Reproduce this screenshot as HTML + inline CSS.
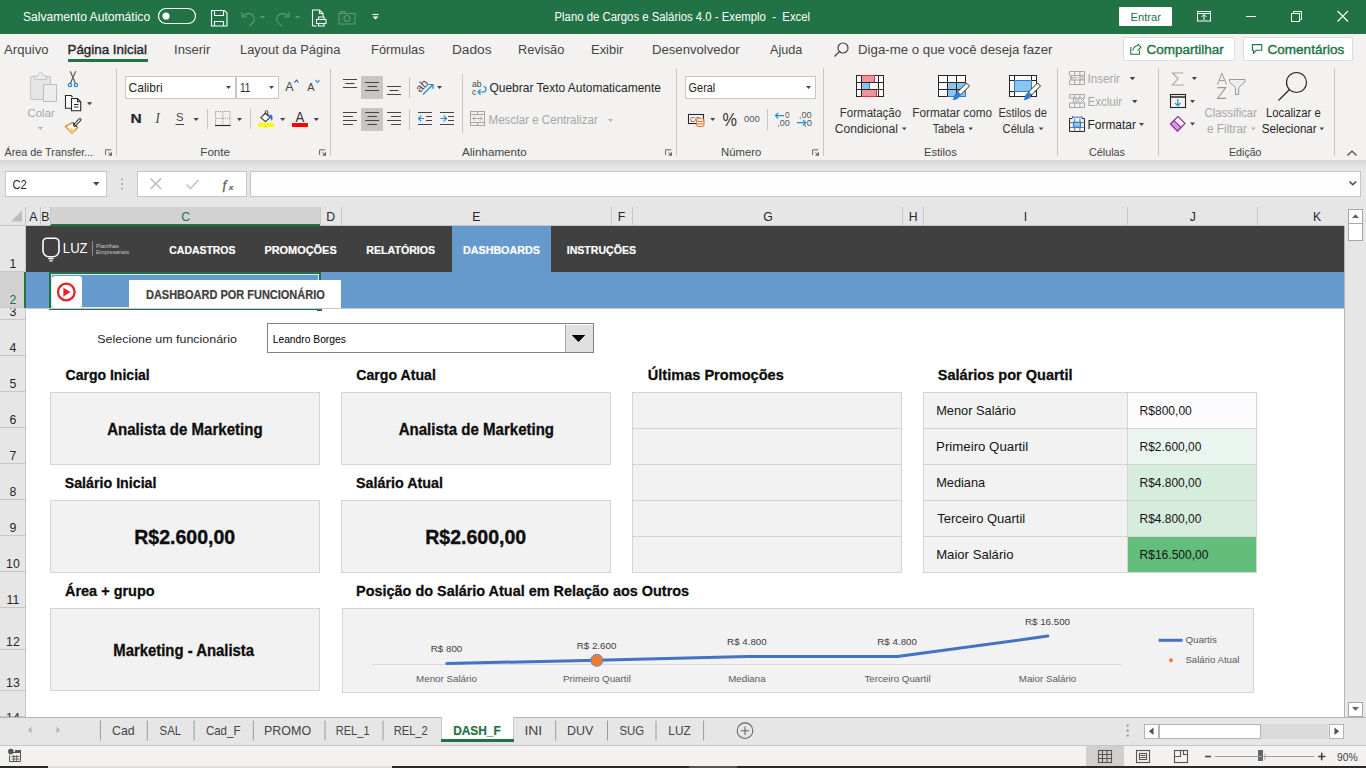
<!DOCTYPE html>
<html><head><meta charset="utf-8"><title>Plano de Cargos e Salários 4.0 - Exemplo - Excel</title>
<style>
html,body{margin:0;padding:0;width:1366px;height:768px;overflow:hidden;background:#fff;}
#app{position:relative;width:1366px;height:768px;overflow:hidden;font-family:"Liberation Sans",sans-serif;}
#app>div{position:absolute;box-sizing:border-box;}
svg{position:absolute;left:0;top:0;}
svg{font-family:"Liberation Sans",sans-serif;}
</style></head><body><div id="app">
<div style="left:0px;top:0px;width:1366px;height:34px;background:#217346"></div>
<div style="left:1119px;top:7px;width:53px;height:19px;background:#fff;border-radius:1px"></div>
<div style="left:0px;top:34px;width:1366px;height:126px;background:#f3f2f1"></div>
<div style="left:68px;top:59px;width:80px;height:3px;background:#217346"></div>
<div style="left:1123px;top:37px;width:112px;height:24px;background:#fff;border:1px solid #dcdcdc;border-radius:2px"></div>
<div style="left:1243px;top:37px;width:110px;height:24px;background:#fff;border:1px solid #dcdcdc;border-radius:2px"></div>
<div style="left:125px;top:76px;width:111px;height:23px;background:#fff;border:1px solid #c6c6c6"></div>
<div style="left:236px;top:76px;width:43px;height:23px;background:#fff;border:1px solid #c6c6c6"></div>
<div style="left:258px;top:123px;width:16px;height:4px;background:#ffff00"></div>
<div style="left:292px;top:123px;width:16px;height:4px;background:#ff0000"></div>
<div style="left:361px;top:76px;width:22px;height:23px;background:#c8c6c4"></div>
<div style="left:361px;top:108px;width:22px;height:23px;background:#c8c6c4"></div>
<div style="left:685px;top:76px;width:131px;height:23px;background:#fff;border:1px solid #c6c6c6"></div>
<div style="left:0px;top:160px;width:1366px;height:66px;background:#e6e6e6"></div>
<div style="left:0px;top:160px;width:1366px;height:8px;background:linear-gradient(#d5d5d5,#e6e6e6)"></div>
<div style="left:5px;top:171px;width:102px;height:26px;background:#fff;border:1px solid #c6c6c6"></div>
<div style="left:137px;top:171px;width:110px;height:26px;background:#fff;border:1px solid #c6c6c6"></div>
<div style="left:250px;top:171px;width:1111px;height:26px;background:#fdfdfd;border:1px solid #c6c6c6"></div>
<div style="left:0px;top:207px;width:1344px;height:19px;background:#e6e6e6;border-bottom:1px solid #c6c6c6"></div>
<div style="left:50px;top:207px;width:270px;height:19px;background:#d2d2d2;border-bottom:2px solid #217346"></div>
<div style="left:0px;top:226px;width:26px;height:491px;background:#e6e6e6"></div>
<div style="left:0px;top:272px;width:26px;height:36px;background:#d2d2d2;border-right:2px solid #217346"></div>
<div style="left:26px;top:226px;width:1318px;height:491px;background:#fff"></div>
<div style="left:26px;top:226px;width:1318px;height:46px;background:#404040"></div>
<div style="left:26px;top:272px;width:1318px;height:37px;background:#6699cc"></div>
<div style="left:452px;top:226px;width:99px;height:46px;background:#6699cc"></div>
<div style="left:49px;top:272px;width:272px;height:38px;border:2px solid #217346"></div>
<div style="left:51px;top:274px;width:268px;height:34px;border:1px solid #dfe8f2"></div>
<div style="left:52px;top:276px;width:30px;height:32px;background:#fff;border-radius:3px"></div>
<div style="left:129px;top:280px;width:212px;height:28px;background:#fff"></div>
<div style="left:317px;top:307.5px;width:5px;height:3.5px;background:#217346"></div>
<div style="left:267px;top:323px;width:327px;height:30px;background:#fff;border:1px solid #7d828a"></div>
<div style="left:565px;top:324px;width:28px;height:28px;background:#e0e0e0;border-left:1px solid #a6a6a6;border-top:1px solid #fff"></div>
<div style="left:50px;top:392px;width:270px;height:73px;background:#f2f2f2;border:1px solid #d4d4d4"></div>
<div style="left:341px;top:392px;width:270px;height:73px;background:#f2f2f2;border:1px solid #d4d4d4"></div>
<div style="left:50px;top:500px;width:270px;height:73px;background:#f2f2f2;border:1px solid #d4d4d4"></div>
<div style="left:341px;top:500px;width:270px;height:73px;background:#f2f2f2;border:1px solid #d4d4d4"></div>
<div style="left:50px;top:608px;width:270px;height:83px;background:#f2f2f2;border:1px solid #d4d4d4"></div>
<div style="left:632px;top:392px;width:270px;height:37px;background:#f2f2f2;border:1px solid #d4d4d4"></div>
<div style="left:632px;top:428px;width:270px;height:37px;background:#f2f2f2;border:1px solid #d4d4d4"></div>
<div style="left:632px;top:464px;width:270px;height:37px;background:#f2f2f2;border:1px solid #d4d4d4"></div>
<div style="left:632px;top:500px;width:270px;height:37px;background:#f2f2f2;border:1px solid #d4d4d4"></div>
<div style="left:632px;top:536px;width:270px;height:37px;background:#f2f2f2;border:1px solid #d4d4d4"></div>
<div style="left:923px;top:392px;width:205px;height:37px;background:#f2f2f2;border:1px solid #d4d4d4"></div>
<div style="left:1127px;top:392px;width:130px;height:37px;background:#fcfcff;border:1px solid #d4d4d4"></div>
<div style="left:923px;top:428px;width:205px;height:37px;background:#f2f2f2;border:1px solid #d4d4d4"></div>
<div style="left:1127px;top:428px;width:130px;height:37px;background:#ebf5f0;border:1px solid #d4d4d4"></div>
<div style="left:923px;top:464px;width:205px;height:37px;background:#f2f2f2;border:1px solid #d4d4d4"></div>
<div style="left:1127px;top:464px;width:130px;height:37px;background:#d6ecdd;border:1px solid #d4d4d4"></div>
<div style="left:923px;top:500px;width:205px;height:37px;background:#f2f2f2;border:1px solid #d4d4d4"></div>
<div style="left:1127px;top:500px;width:130px;height:37px;background:#d6ecdd;border:1px solid #d4d4d4"></div>
<div style="left:923px;top:536px;width:205px;height:37px;background:#f2f2f2;border:1px solid #d4d4d4"></div>
<div style="left:1127px;top:536px;width:130px;height:37px;background:#63be7b;border:1px solid #d4d4d4"></div>
<div style="left:342px;top:608px;width:912px;height:85px;background:#f2f2f2;border:1px solid #d4d4d4"></div>
<div style="left:1344px;top:207px;width:22px;height:510px;background:#e6e6e6"></div>
<div style="left:1344px;top:226px;width:1px;height:491px;background:#b4b4b4"></div>
<div style="left:1348px;top:209px;width:15px;height:15px;background:#fff;border:1px solid #a6a6a6"></div>
<div style="left:1348px;top:223px;width:15px;height:18px;background:#fff;border:1px solid #a6a6a6"></div>
<div style="left:1348px;top:702px;width:15px;height:15px;background:#fff;border:1px solid #a6a6a6"></div>
<div style="left:0px;top:717px;width:1366px;height:29px;background:#e6e6e6;border-top:1px solid #b4b4b4;border-bottom:1px solid #c6c6c6"></div>
<div style="left:441px;top:717px;width:73px;height:25px;background:#fff;border-left:1px solid #c6c6c6;border-right:1px solid #c6c6c6"></div>
<div style="left:441px;top:739px;width:73px;height:3px;background:#217346"></div>
<div style="left:1159px;top:724px;width:169px;height:15px;background:#dadada"></div>
<div style="left:1144px;top:724px;width:15px;height:15px;background:#fff;border:1px solid #b4b4b4"></div>
<div style="left:1159px;top:724px;width:102px;height:15px;background:#fff;border:1px solid #b4b4b4"></div>
<div style="left:1329px;top:724px;width:15px;height:15px;background:#fff;border:1px solid #b4b4b4"></div>
<div style="left:0px;top:746px;width:1366px;height:20px;background:#f3f2f1"></div>
<div style="left:1086px;top:746px;width:38px;height:20px;background:#d2d0ce"></div>
<div style="left:1258px;top:750px;width:5px;height:11px;background:#666"></div>
<div style="left:0px;top:766px;width:1366px;height:2px;background:#2a2a2a"></div>
<div style="left:48px;top:766px;width:344px;height:2px;background:#dedede"></div>
<div style="left:689px;top:766px;width:48px;height:2px;background:#555"></div>
<svg width="1366" height="768" viewBox="0 0 1366 768">
<defs><clipPath id="rowclip" clipPathUnits="userSpaceOnUse"><rect x="0" y="226" width="26" height="491"/></clipPath><clipPath id="row3clip" clipPathUnits="userSpaceOnUse"><rect x="0" y="308.6" width="26" height="12"/></clipPath></defs>
<rect x="158.5" y="8.5" width="37" height="15" rx="7.5" fill="none" stroke="#fff" stroke-width="1.2"/>
<circle cx="166" cy="16" r="3.6" fill="#fff"/>
<g fill="none" stroke="#fff" stroke-width="1.1"><path d="M211.5 10.5h13l2.5 2.5v13h-15.5z"/><path d="M214.5 10.5v5h9v-5"/><path d="M214.5 26v-4.5h9V26"/></g>
<g fill="none" stroke="#5c9a76" stroke-width="1.1"><path d="M242 12v5h5"/><path d="M242.5 16.5c3-4 10-4 11.5 1 1 3-1 6-5 8.5"/><path d="M260 16l2.5 2.5 2.5-2.5z" fill="#5c9a76" stroke="none"/><path d="M289 12v5h-5"/><path d="M288.5 16.5c-3-4-10-4-11.5 1-1 3 1 6 5 8.5"/><path d="M295 16l2.5 2.5 2.5-2.5z" fill="#5c9a76" stroke="none"/></g>
<g fill="none" stroke="#fff" stroke-width="1.1"><path d="M312.5 26v-16h7l3.5 3.5v3"/><path d="M319.5 10v3.5h3.5"/><rect x="316.5" y="19.5" width="9.5" height="4"/><path d="M318.5 19.5v-2.5h5.5v2.5M318.5 23.5v2.5h5.5v-2.5"/><path d="M312.5 26h4"/></g>
<g fill="none" stroke="#5c9a76" stroke-width="1.1"><rect x="339" y="13.5" width="16" height="10.5"/><path d="M341 13.5v-2h3.5v2"/><circle cx="347" cy="18.5" r="3"/></g>
<path d="M372.5 14.5h6" stroke="#fff" stroke-width="1.1"/><path d="M372.5 16.5h6l-3 3z" fill="#fff"/>
<g fill="none" stroke="#fff" stroke-width="1"><rect x="1197.5" y="11.5" width="13" height="9.5"/><path d="M1197.5 13.5h13"/><path d="M1204 20v-5.5M1201.5 17l2.5-2.5 2.5 2.5"/></g>
<path d="M1246 16.5h10" stroke="#fff" stroke-width="1"/>
<g fill="none" stroke="#fff" stroke-width="1"><rect x="1291.5" y="13.5" width="8" height="8"/><path d="M1293.5 13.5v-2h8v8h-2"/></g>
<path d="M1337.5 11l10.5 10.5M1348 11l-10.5 10.5" stroke="#fff" stroke-width="1.1"/>
<g fill="none" stroke="#444" stroke-width="1.2"><circle cx="843" cy="48" r="5"/><path d="M839.5 51.5l-5 5"/></g>
<g fill="none" stroke="#217346" stroke-width="1.1"><path d="M1130.8 47v7.3h8.7v-3.8"/><path d="M1132.8 50.8c.3-3 2.2-5 5.5-5.3"/><path d="M1137.6 43.6l3.3 3.6-3.3 3.4"/></g>
<g fill="none" stroke="#217346" stroke-width="1.1" stroke-linejoin="round"><path d="M1252.4 44.6h9.4v5.7h-5.5l-2.8 3v-3h-1.1z"/></g>
<path d="M116.5 68.5V156" stroke="#c8c6c4" stroke-width="1"/>
<path d="M330.5 68.5V156" stroke="#c8c6c4" stroke-width="1"/>
<path d="M676.5 68.5V156" stroke="#c8c6c4" stroke-width="1"/>
<path d="M823.5 68.5V156" stroke="#c8c6c4" stroke-width="1"/>
<path d="M1057.5 68.5V156" stroke="#c8c6c4" stroke-width="1"/>
<path d="M1158.5 68.5V156" stroke="#c8c6c4" stroke-width="1"/>
<path d="M1334.5 68.5V156" stroke="#c8c6c4" stroke-width="1"/>
<g><path d="M105.6 155v-5.2h5.6" fill="none" stroke="#666" stroke-width="1"/><path d="M108 155.8h4v-4z" fill="#666"/><path d="M108.2 152l2.2 2.2" stroke="#666" stroke-width="0.9"/></g>
<g><path d="M319.6 155v-5.2h5.6" fill="none" stroke="#666" stroke-width="1"/><path d="M322 155.8h4v-4z" fill="#666"/><path d="M322.2 152l2.2 2.2" stroke="#666" stroke-width="0.9"/></g>
<g><path d="M665.6 155v-5.2h5.6" fill="none" stroke="#666" stroke-width="1"/><path d="M668 155.8h4v-4z" fill="#666"/><path d="M668.2 152l2.2 2.2" stroke="#666" stroke-width="0.9"/></g>
<g><path d="M812.6 155v-5.2h5.6" fill="none" stroke="#666" stroke-width="1"/><path d="M815 155.8h4v-4z" fill="#666"/><path d="M815.2 152l2.2 2.2" stroke="#666" stroke-width="0.9"/></g>
<path d="M1347.5 155.5l4.5-4.5 4.5 4.5" fill="none" stroke="#444" stroke-width="1.2"/>
<g><path d="M30.5 76.5h4v3h12v-3h4v23h-20z" fill="#e6e6e6" stroke="#c4c4c4" stroke-width="1"/><path d="M34.5 79.5v-3.5h3.5c0-2.5 1.2-3.5 2.5-3.5s2.5 1 2.5 3.5h3.5v3.5z" fill="#ececec" stroke="#c4c4c4"/><rect x="43.5" y="84.5" width="13" height="17" fill="#ececec" stroke="#bdbdbd"/></g>
<path d="M37.8 127h5.3l-2.65 3.07z" fill="#b4b4b4"/>
<g fill="none" stroke-width="1.1"><path d="M70.2 71.3l5.2 12M75.7 71.3l-5.3 12" stroke="#555"/><circle cx="70" cy="85" r="1.7" stroke="#1e8bcd" stroke-width="1.2"/><circle cx="75.9" cy="85" r="1.7" stroke="#1e8bcd" stroke-width="1.2"/></g>
<g fill="#fff" stroke="#262626" stroke-width="1.1"><path d="M71.5 108.2h-6V95.5h5.5l1.5 1.5"/><path d="M71.5 98.5h6l3.2 3.2v9h-9.2z"/><path d="M77.5 98.5v3.3h3.2" fill="none"/><path d="M74 104.5h4.5M74 107h4.5" fill="none"/></g>
<path d="M87 102.3h5.2l-2.6 3.02z" fill="#444"/>
<g><path d="M65.3 126.3l7.6-3.9 4.7 5.1-5.6 5.8z" fill="#fff" stroke="#e8852b" stroke-width="1.3" stroke-linejoin="round"/><path d="M68.3 129.6l4 3.6 2.5-2.7-3.2-2.6z" fill="#f6d27a"/><path d="M74.6 125.2l5.4-5.6" stroke="#333" stroke-width="3.2" stroke-linecap="round"/><path d="M74.6 125.2l5.4-5.6" stroke="#fff" stroke-width="1.2" stroke-linecap="round"/><path d="M73 123.2l3.7 3.7" stroke="#333" stroke-width="1.2"/></g>
<path d="M226 86h5l-2.5 2.90z" fill="#444"/>
<path d="M269 86h5l-2.5 2.90z" fill="#444"/>
<path d="M294.5 82.5l2-2.3 2 2.3" fill="none" stroke="#2b579a" stroke-width="1.1"/>
<path d="M315.5 80.2l2 2.3 2-2.3" fill="none" stroke="#2b7cd3" stroke-width="1.1"/>
<path d="M175.5 124.5h8.5" stroke="#444" stroke-width="1"/>
<path d="M193.5 118h5.3l-2.65 3.07z" fill="#444"/>
<path d="M207.5 109V129" stroke="#c8c6c4" stroke-width="1"/>
<g fill="none" stroke="#9a9a9a" stroke-width="1" stroke-dasharray="1.2 1"><path d="M215.5 111.5h14.5v13.5M215.5 111.5v13.5M222.8 112v12.5M216 118.3h14"/></g><path d="M215 125.5h15.5" stroke="#262626" stroke-width="1.1"/>
<path d="M236.8 118h5.3l-2.65 3.07z" fill="#444"/>
<path d="M250.5 109V129" stroke="#c8c6c4" stroke-width="1"/>
<g><path d="M260.8 117.7l4.6-4.5 4.9 3.9-4.8 4.6z" fill="#fff" stroke="#333" stroke-width="1.1" stroke-linejoin="round"/><path d="M265.3 114.6v-2.8a1.25 1.25 0 0 1 2.5 0v4.6" fill="none" stroke="#333" stroke-width="1"/><path d="M269.6 114.5c1.7-.3 3 1 3 3 0 1.4-.5 2.7-.9 3.4-.4-.9-1-2.4-2-3.6z" fill="#1e7bcd"/></g>
<path d="M280 118h5.3l-2.65 3.07z" fill="#444"/>
<path d="M313.7 118h5.3l-2.65 3.07z" fill="#444"/>
<path d="M343 79.5H357M343 87.5H357" stroke="#444" stroke-width="1.1"/>
<path d="M345.5 83.5H354.5" stroke="#444" stroke-width="1.1"/>
<path d="M365 82.5H379M365 90.5H379" stroke="#444" stroke-width="1.1"/>
<path d="M367.5 86.5H377" stroke="#444" stroke-width="1.1"/>
<path d="M387 86.5H401M387 94.5H401" stroke="#444" stroke-width="1.1"/>
<path d="M389.5 90.5H398.5" stroke="#444" stroke-width="1.1"/>
<path d="M409.5 77V98" stroke="#c8c6c4" stroke-width="1"/>
<g><text transform="translate(420 93) rotate(-45)" font-size="11.5" fill="#444">ab</text><path d="M423 94.5l10-10M428.5 84.5h4.5v4.5" fill="none" stroke="#1e8bcd" stroke-width="1.2"/></g>
<path d="M437 86h5l-2.5 2.90z" fill="#444"/>
<path d="M462.5 74V133" stroke="#c8c6c4" stroke-width="1"/>
<g><text x="472" y="87" font-size="8.6" fill="#444">ab</text><text x="472" y="94.5" font-size="8.6" fill="#444">c</text><path d="M478.5 92h4.5c2.3 0 3-1.3 3-2.8s-.7-2.7-2.5-2.7" fill="none" stroke="#1e8bcd" stroke-width="1.2"/><path d="M480.5 89.5l-2.5 2.5 2.5 2.5" fill="none" stroke="#1e8bcd" stroke-width="1.2"/></g>
<path d="M343 112.5H357M343 120.5H357" stroke="#444" stroke-width="1.1"/>
<path d="M343 116.5H353M343 124.5H353" stroke="#444" stroke-width="1.1"/>
<path d="M365.3 112.5H379M365.3 120.5H379" stroke="#444" stroke-width="1.1"/>
<path d="M367.5 116.5H377M367.5 124.5H377" stroke="#444" stroke-width="1.1"/>
<path d="M387 112.5H401M387 120.5H401" stroke="#444" stroke-width="1.1"/>
<path d="M391 116.5H401M391 124.5H401" stroke="#444" stroke-width="1.1"/>
<path d="M409.5 109V130" stroke="#c8c6c4" stroke-width="1"/>
<path d="M418 112.5H432M418 124.5H432" stroke="#444" stroke-width="1.1"/>
<path d="M426 116.5H432M426 120.5H432" stroke="#444" stroke-width="1.1"/>
<path d="M424 118.5h-5.5M421.3 115.7l-2.8 2.8 2.8 2.8" fill="none" stroke="#1e8bcd" stroke-width="1.2"/>
<path d="M440 112.5H454M440 124.5H454" stroke="#444" stroke-width="1.1"/>
<path d="M448 116.5H454M448 120.5H454" stroke="#444" stroke-width="1.1"/>
<path d="M440.5 118.5h5.5M443.7 115.7l2.8 2.8-2.8 2.8" fill="none" stroke="#1e8bcd" stroke-width="1.2"/>
<g fill="none" stroke="#a6a6a6" stroke-width="1"><rect x="470.5" y="111.5" width="14" height="14"/><path d="M470.5 114.5h14M470.5 122.5h14M477.5 111.5v3M477.5 122.5v3"/><path d="M473 118.5h9M474.8 116.5l-2 2 2 2M480.2 116.5l2 2-2 2"/></g>
<path d="M608 119h5l-2.5 2.90z" fill="#b4b4b4"/>
<path d="M806 86h5l-2.5 2.90z" fill="#444"/>
<g><rect x="688.5" y="114.5" width="15" height="9" fill="#fff" stroke="#262626" stroke-width="1.1"/><text x="690" y="122" font-size="7" fill="#262626">CC</text><g fill="#fff" stroke="#ed7d31" stroke-width="1.1"><path d="M696.5 120v5c0 1 1.5 1.6 3.7 1.6s3.7-.6 3.7-1.6v-5"/><ellipse cx="700.2" cy="120" rx="3.7" ry="1.5"/><path d="M696.5 122.5c0 1 1.5 1.6 3.7 1.6s3.7-.6 3.7-1.6"/></g></g>
<path d="M710.2 118h5l-2.5 2.90z" fill="#444"/>
<path d="M767.5 109V130" stroke="#c8c6c4" stroke-width="1"/>
<path d="M784 115.6h-8.5M778.3 112.8l-2.8 2.8 2.8 2.8" fill="none" stroke="#1e8bcd" stroke-width="1.2"/>
<path d="M797 122.7h8.5M803 119.9l2.8 2.8-2.8 2.8" fill="none" stroke="#1e8bcd" stroke-width="1.2"/>
<g stroke="#262626" stroke-width="1"><rect x="856.5" y="75.5" width="27" height="21" fill="#fff"/><rect x="861.5" y="75.5" width="13" height="7" fill="#f4919a" stroke="#d9363e"/><rect x="861.5" y="89.5" width="15" height="7" fill="#f4919a" stroke="#d9363e"/><rect x="861.5" y="82.5" width="8" height="7" fill="#8cc4ec" stroke="#2b7cd3"/><path d="M856.5 82.5h27M856.5 89.5h27M861.5 75.5v21M878.5 75.5v21" fill="none"/></g>
<path d="M902 127.5h4.6l-2.3 2.67z" fill="#444"/>
<path d="M968.4 127.5h4.6l-2.3 2.67z" fill="#444"/>
<path d="M1038.8 127.5h4.6l-2.3 2.67z" fill="#444"/>
<g stroke="#262626" stroke-width="1"><rect x="938.5" y="75.5" width="27" height="21" fill="#fff"/><rect x="947.5" y="82.5" width="18" height="14" fill="#8cc4ec" stroke="#2b7cd3"/><path d="M938.5 82.5h27M938.5 89.5h27M947.5 75.5v21M956.5 75.5v21" fill="none"/></g>
<g transform="translate(967.5 83)"><path d="M-1 0l3 3-9 9-3-3z" fill="#fff" stroke="#262626" stroke-width="1"/><path d="M-10 9l3 3c-1 3-4 5-8 5 1-1 1-2 1.5-3.5.5-2 1.5-4 3.5-4.5z" fill="#2b7cd3"/></g>
<g stroke="#262626" stroke-width="1"><rect x="1009.5" y="75.5" width="27" height="21" fill="#fff"/><path d="M1009.5 80.5h27M1009.5 91.5h27M1014.5 75.5v21M1031.5 75.5v21" fill="none"/><rect x="1014.5" y="80.5" width="17" height="11" fill="#8cc4ec" stroke="#2b7cd3"/></g>
<g transform="translate(1038.5 83)"><path d="M-1 0l3 3-9 9-3-3z" fill="#fff" stroke="#262626" stroke-width="1"/><path d="M-10 9l3 3c-1 3-4 5-8 5 1-1 1-2 1.5-3.5.5-2 1.5-4 3.5-4.5z" fill="#2b7cd3"/></g>
<g fill="none" stroke="#a6a6a6" stroke-width="1"><rect x="1080" y="75.6" width="4.5" height="4.4" fill="#d0d0d0" stroke="none"/><path d="M1069.5 75V71.5h15v13h-15V80.5M1069.5 75.6h15M1069.5 80h15M1074.7 71.5v4M1079.9 71.5v13M1074.7 80v4.5"/><path d="M1077 77.8h-7M1072.5 75.3l-2.5 2.5 2.5 2.5" stroke="#a0a0a0"/></g>
<path d="M1129.7 77h5.5l-2.75 3.19z" fill="#444"/>
<g fill="none" stroke="#a6a6a6" stroke-width="1"><rect x="1074.7" y="98" width="5" height="5" fill="#d0d0d0" stroke="none"/><path d="M1069.5 94.5h15v3.5h-15zM1069.5 103h15v4.5h-15zM1074.7 94.5v3.5M1079.9 94.5v3.5M1074.7 103v4.5M1079.9 103v4.5M1073.5 98v5M1080.5 98.5l4 4M1084.5 98.5l-4 4"/></g>
<path d="M1132 100h5.5l-2.75 3.19z" fill="#444"/>
<g fill="none" stroke="#262626" stroke-width="1"><path d="M1072 118.5h-2.5v13h15v-13H1082"/><path d="M1069.5 122.5h15M1069.5 127.5h15M1074.7 118.5v13M1079.9 118.5v13" stroke="#555" stroke-width="0.8"/><rect x="1073.5" y="122.2" width="7" height="5" fill="#8cc4ec" stroke="#2b7cd3" stroke-width="1.1"/><path d="M1072.5 117.2h9.5M1072.5 116v2.5M1082 116v2.5" stroke="#2b7cd3"/></g>
<path d="M1139 123h5l-2.5 2.90z" fill="#444"/>
<path d="M1183.5 73h-11l5.5 5.5-5.5 6.5h11.5" fill="none" stroke="#a6a6a6" stroke-width="1.1"/>
<path d="M1191.8 77h5.2l-2.6 3.02z" fill="#444"/>
<g fill="none"><rect x="1170.5" y="94.5" width="15" height="13" stroke="#262626" stroke-width="1.1"/><path d="M1170.5 97h15" stroke="#262626" stroke-width="1.5"/><path d="M1177.8 99v6.5M1175 102.8l2.8 2.8 2.8-2.8" stroke="#1e8bcd" stroke-width="1.2"/></g>
<path d="M1190 100h5l-2.5 2.90z" fill="#444"/>
<g><path d="M1170.5 124l7.5-7.5 7 7-7.5 7.5z" fill="#fff" stroke="#9b3aa8" stroke-width="1.3" stroke-linejoin="round"/><path d="M1170.5 124l3.5-3.5 7 7-3.5 3.5z" fill="#d49fdc" stroke="#9b3aa8" stroke-width="1.3" stroke-linejoin="round"/></g>
<path d="M1190 122.5h5l-2.5 2.90z" fill="#444"/>
<g fill="none" stroke="#9a9a9a" stroke-width="1"><path d="M1217.5 84.6l4.4-11.3 4.6 11.3M1219.2 80.6h5.4"/><path d="M1217.5 87.6h8.3l-8.3 10.8h8.5" stroke-width="1.1"/><path d="M1229.5 79.5h15.5v2.5l-6.3 5.5v7h-3.2v-7l-6-5.5z" fill="#ededed"/></g>
<path d="M1251 127.5h4.6l-2.3 2.67z" fill="#b4b4b4"/>
<g fill="none" stroke="#262626" stroke-width="1.2"><circle cx="1296.5" cy="82.5" r="10"/><path d="M1289.5 89.5l-11 11"/></g>
<path d="M1319.5 127.5h4.6l-2.3 2.67z" fill="#444"/>
<path d="M93 182h6.5l-3.25 3.77z" fill="#444"/>
<g fill="#9a9a9a"><circle cx="122" cy="179.5" r="0.9"/><circle cx="122" cy="184" r="0.9"/><circle cx="122" cy="188.5" r="0.9"/></g>
<path d="M150.5 178.5l10.5 10.5M161 178.5l-10.5 10.5" stroke="#b4b4b4" stroke-width="1.3"/>
<path d="M186.5 184.5l4 4 8-8.5" fill="none" stroke="#c4c4c4" stroke-width="1.6"/>
<path d="M1349.5 181.5l3.3 3.3 3.3-3.3" fill="none" stroke="#444" stroke-width="1.5"/>
<path d="M22 210.5v11h-11z" fill="#bdbdbd"/>
<path d="M40.5 207V225" stroke="#c6c6c6" stroke-width="1"/>
<path d="M50.5 207V225" stroke="#c6c6c6" stroke-width="1"/>
<path d="M320.5 207V225" stroke="#c6c6c6" stroke-width="1"/>
<path d="M341.5 207V225" stroke="#c6c6c6" stroke-width="1"/>
<path d="M611.5 207V225" stroke="#c6c6c6" stroke-width="1"/>
<path d="M632.5 207V225" stroke="#c6c6c6" stroke-width="1"/>
<path d="M902.5 207V225" stroke="#c6c6c6" stroke-width="1"/>
<path d="M923.5 207V225" stroke="#c6c6c6" stroke-width="1"/>
<path d="M1127.5 207V225" stroke="#c6c6c6" stroke-width="1"/>
<path d="M1257.5 207V225" stroke="#c6c6c6" stroke-width="1"/>
<path d="M25.5 207V717" stroke="#c6c6c6" stroke-width="1"/>
<path d="M25.5 226V717" stroke="#c6c6c6" stroke-width="1"/>
<path d="M0 271.5H25" stroke="#c6c6c6" stroke-width="1"/>
<path d="M0 307.5H25" stroke="#c6c6c6" stroke-width="1"/>
<path d="M0 319.5H25" stroke="#c6c6c6" stroke-width="1"/>
<path d="M0 355.5H25" stroke="#c6c6c6" stroke-width="1"/>
<path d="M0 391.5H25" stroke="#c6c6c6" stroke-width="1"/>
<path d="M0 427.5H25" stroke="#c6c6c6" stroke-width="1"/>
<path d="M0 463.5H25" stroke="#c6c6c6" stroke-width="1"/>
<path d="M0 499.5H25" stroke="#c6c6c6" stroke-width="1"/>
<path d="M0 535.5H25" stroke="#c6c6c6" stroke-width="1"/>
<path d="M0 571.5H25" stroke="#c6c6c6" stroke-width="1"/>
<path d="M0 607.5H25" stroke="#c6c6c6" stroke-width="1"/>
<path d="M0 649.5H25" stroke="#c6c6c6" stroke-width="1"/>
<path d="M0 690.5H25" stroke="#c6c6c6" stroke-width="1"/>
<path d="M0 716.5H25" stroke="#c6c6c6" stroke-width="1"/>
<path d="M25 272V308" stroke="#217346" stroke-width="2"/>
<path d="M26 308.5H1344" stroke="#c8c8c8" stroke-width="1"/>
<g fill="none" stroke="#fff" stroke-width="1.6"><path d="M47.5 238.2h7.5a4 4 0 0 1 4 4v8.5a6 6 0 0 1-6 6h-4a6 6 0 0 1-6-6v-8.5a4 4 0 0 1 4-4z"/><path d="M48.3 258.6h5.4M49.3 260.9h3.4" stroke-width="1.3"/></g>
<path d="M92.5 241v14.5" stroke="#8a8a8a" stroke-width="1.1"/>
<g><circle cx="66.3" cy="292" r="8.3" fill="none" stroke="#e52329" stroke-width="2.3"/><path d="M63.4 287.7l7.2 4.4-7.2 4.4z" fill="#e52329"/></g>
<path d="M571.7 335h13.6l-6.8 7z" fill="#000"/>
<path d="M372 664.5H1122" stroke="#d9d9d9" stroke-width="1"/>
<polyline points="446.8,663.4 596.8,660.3 747.2,656.5 897.4,656.5 1047.8,636.1" fill="none" stroke="#4472c4" stroke-width="3" stroke-linecap="round" stroke-linejoin="round"/>
<circle cx="596.8" cy="660.3" r="6" fill="#ed7d31" stroke="#5a80c8" stroke-width="0.9"/>
<path d="M1158.6 640.3h24" stroke="#4472c4" stroke-width="3"/>
<circle cx="1171" cy="660.2" r="2" fill="#ed7d31"/>
<path d="M1352 218h7l-3.5-3.8z" fill="#606060"/>
<path d="M1352 707h7l-3.5 3.8z" fill="#606060"/>
<path d="M31.5 726.5l-3.5 3.5 3.5 3.5z" fill="#b4b4b4"/><path d="M56.5 726.5l3.5 3.5-3.5 3.5z" fill="#b4b4b4"/>
<path d="M100.4 720.5V740.5" stroke="#9a9a9a" stroke-width="1"/>
<path d="M147.3 720.5V740.5" stroke="#9a9a9a" stroke-width="1"/>
<path d="M194.1 720.5V740.5" stroke="#9a9a9a" stroke-width="1"/>
<path d="M253.3 720.5V740.5" stroke="#9a9a9a" stroke-width="1"/>
<path d="M325.0 720.5V740.5" stroke="#9a9a9a" stroke-width="1"/>
<path d="M383.0 720.5V740.5" stroke="#9a9a9a" stroke-width="1"/>
<path d="M555.7 720.5V740.5" stroke="#9a9a9a" stroke-width="1"/>
<path d="M607.5 720.5V740.5" stroke="#9a9a9a" stroke-width="1"/>
<path d="M656.0 720.5V740.5" stroke="#9a9a9a" stroke-width="1"/>
<path d="M703.6 720.5V740.5" stroke="#9a9a9a" stroke-width="1"/>
<g fill="none" stroke="#666" stroke-width="1.1"><circle cx="745" cy="730.7" r="7.8"/><path d="M745 726.5v8.4M740.8 730.7h8.4"/></g>
<g fill="#a0a0a0"><circle cx="1127.7" cy="725.5" r="1.2"/><circle cx="1127.7" cy="730.5" r="1.2"/><circle cx="1127.7" cy="735.5" r="1.2"/></g>
<path d="M1153.5 727.5v7.5l-4.6-3.75z" fill="#505050"/>
<path d="M1334.5 727.5v7.5l4.6-3.75z" fill="#505050"/>
<g fill="none" stroke="#555" stroke-width="1"><path d="M13 752.5h7.5v9h-11v-6"/><path d="M11.5 756.5h8M11.5 759h8M13.8 755v6M16.8 755v6" stroke-width="0.9"/></g><rect x="15" y="750" width="6" height="2.5" fill="#555"/><circle cx="10.8" cy="751.6" r="2.8" fill="#555"/>
<g fill="none" stroke="#555" stroke-width="1.1"><rect x="1098.5" y="750.5" width="13" height="12"/><path d="M1098.5 754.5h13M1098.5 758.5h13M1102.5 750.5v12M1107 750.5v12"/></g>
<g fill="none" stroke="#555" stroke-width="1.1"><rect x="1136.5" y="750.5" width="13" height="12"/><rect x="1139.5" y="753.5" width="7" height="6"/><path d="M1140.5 755.5h5M1140.5 757.5h5"/></g>
<g fill="none" stroke="#555" stroke-width="1.1"><rect x="1174.5" y="750.5" width="13" height="12"/><path d="M1174.5 756.5h6v-6M1183.5 750.5v4h4"/></g>
<path d="M1205 756.5h6" stroke="#444" stroke-width="1.6"/><path d="M1215 756.5h99.5" stroke="#a0a0a0" stroke-width="1"/><path d="M1265 753.5v6" stroke="#a0a0a0" stroke-width="1"/>
<path d="M1318 756.5h7.5M1321.7 752.7v7.6" stroke="#444" stroke-width="1.6"/>
<text transform="translate(23.00 21) scale(0.9856 1)" font-size="12.29" fill="#fff">Salvamento Automático</text>
<text transform="translate(554.48 20.5) scale(0.9245 1)" font-size="12.29" fill="#fff">Plano de Cargos e Salários 4.0 - Exemplo  -  Excel</text>
<text transform="translate(1130.50 20.5) scale(0.9528 1)" font-size="11.73" fill="#217346">Entrar</text>
<text transform="translate(4.10 54.2) scale(0.9987 1)" font-size="13.13" fill="#444">Arquivo</text>
<text transform="translate(67.48 54.2) scale(1.0186 1)" font-size="13.13" fill="#262626" stroke="#262626" stroke-width="0.39">Página Inicial</text>
<text transform="translate(174.00 54.2) scale(0.9984 1)" font-size="13.13" fill="#444">Inserir</text>
<text transform="translate(240.02 54.2) scale(0.9828 1)" font-size="13.13" fill="#444">Layout da Página</text>
<text transform="translate(371.02 54.2) scale(0.9801 1)" font-size="13.13" fill="#444">Fórmulas</text>
<text transform="translate(451.96 54.2) scale(1.0445 1)" font-size="13.13" fill="#444">Dados</text>
<text transform="translate(518.02 54.2) scale(0.9768 1)" font-size="13.13" fill="#444">Revisão</text>
<text transform="translate(591.01 54.2) scale(0.9872 1)" font-size="13.13" fill="#444">Exibir</text>
<text x="652.00" y="54.2" font-size="13.13" fill="#444">Desenvolvedor</text>
<text transform="translate(770.00 54.2) scale(0.9638 1)" font-size="13.13" fill="#444">Ajuda</text>
<text transform="translate(857.99 54.2) scale(1.0104 1)" font-size="13.13" fill="#444">Diga-me o que você deseja fazer</text>
<text transform="translate(1146.50 54) scale(1.0640 1)" font-size="12.71" fill="#217346" stroke="#217346" stroke-width="0.38">Compartilhar</text>
<text transform="translate(1267.50 54) scale(1.0659 1)" font-size="12.71" fill="#217346" stroke="#217346" stroke-width="0.38">Comentários</text>
<text transform="translate(4.50 156) scale(0.9215 1)" font-size="11.73" fill="#444">Área de Transfer...</text>
<text transform="translate(200.30 156) scale(0.9915 1)" font-size="11.73" fill="#444">Fonte</text>
<text transform="translate(462.00 156) scale(0.9950 1)" font-size="11.73" fill="#444">Alinhamento</text>
<text transform="translate(721.00 156) scale(0.9653 1)" font-size="11.73" fill="#444">Número</text>
<text transform="translate(924.00 156) scale(0.9522 1)" font-size="11.73" fill="#444">Estilos</text>
<text transform="translate(1089.00 156) scale(0.9178 1)" font-size="11.73" fill="#444">Células</text>
<text transform="translate(1229.00 156) scale(0.9087 1)" font-size="11.73" fill="#444">Edição</text>
<text transform="translate(27.50 116.8) scale(0.9750 1)" font-size="11.73" fill="#a6a6a6">Colar</text>
<text transform="translate(128.50 92) scale(0.9577 1)" font-size="12.57" fill="#262626">Calibri</text>
<text transform="translate(240.00 92) scale(0.7972 1)" font-size="12.57" fill="#262626">11</text>
<text transform="translate(285.30 91) scale(0.9444 1)" font-size="13.27" fill="#444">A</text>
<text transform="translate(307.20 91) scale(1.0429 1)" font-size="10.47" fill="#444">A</text>
<text transform="translate(130.50 123) scale(1.1444 1)" font-size="13.55" fill="#262626" font-weight="700" stroke="#262626" stroke-width="0.24">N</text>
<text transform="translate(155.54 123) scale(0.9429 1)" font-size="13.55" fill="#444" style="font-family:'Liberation Serif',serif" font-style="italic">I</text>
<text transform="translate(176.00 121) scale(0.9750 1)" font-size="11.45" fill="#444">S</text>
<text transform="translate(295.50 121.5) scale(0.8727 1)" font-size="15.08" fill="#333">A</text>
<text transform="translate(489.50 92) scale(0.9747 1)" font-size="12.29" fill="#262626">Quebrar Texto Automaticamente</text>
<text transform="translate(488.56 124) scale(0.9414 1)" font-size="12.29" fill="#a6a6a6">Mesclar e Centralizar</text>
<text transform="translate(688.60 92) scale(0.8873 1)" font-size="12.29" fill="#262626">Geral</text>
<text transform="translate(722.60 126) scale(0.8647 1)" font-size="18.85" fill="#333">%</text>
<text transform="translate(743.90 121.6) scale(1.0304 1)" font-size="9.22" fill="#555">000</text>
<text x="785.00" y="117.8" font-size="8.38" fill="#555">0</text>
<text transform="translate(777.20 126) scale(1.0224 1)" font-size="8.80" fill="#555">,00</text>
<text transform="translate(799.00 117.8) scale(1.0387 1)" font-size="8.80" fill="#555">,00</text>
<text transform="translate(804.00 126) scale(1.0753 1)" font-size="8.80" fill="#555">,0</text>
<text transform="translate(839.80 117) scale(0.9588 1)" font-size="12.01" fill="#333">Formatação</text>
<text transform="translate(834.70 133) scale(1.0090 1)" font-size="12.01" fill="#333">Condicional</text>
<text transform="translate(912.20 117) scale(0.9831 1)" font-size="12.01" fill="#333">Formatar como</text>
<text transform="translate(932.70 133) scale(0.8967 1)" font-size="12.01" fill="#333">Tabela</text>
<text transform="translate(998.40 117) scale(0.9322 1)" font-size="12.01" fill="#333">Estilos de</text>
<text transform="translate(1002.60 133) scale(0.9288 1)" font-size="12.01" fill="#333">Célula</text>
<text transform="translate(1087.55 82.8) scale(0.9476 1)" font-size="12.29" fill="#a6a6a6">Inserir</text>
<text transform="translate(1087.56 105.9) scale(0.9368 1)" font-size="12.29" fill="#a6a6a6">Excluir</text>
<text transform="translate(1087.53 128.9) scale(0.9708 1)" font-size="12.29" fill="#262626">Formatar</text>
<text transform="translate(1204.50 117) scale(0.9486 1)" font-size="12.01" fill="#a6a6a6">Classificar</text>
<text transform="translate(1207.00 133) scale(0.9834 1)" font-size="12.01" fill="#a6a6a6">e Filtrar</text>
<text transform="translate(1266.00 117) scale(0.9425 1)" font-size="12.01" fill="#262626">Localizar e</text>
<text transform="translate(1261.70 133) scale(0.9699 1)" font-size="12.01" fill="#262626">Selecionar</text>
<text transform="translate(12.50 189) scale(0.9137 1)" font-size="12.29" fill="#262626">C2</text>
<text transform="translate(222.80 189) scale(0.9167 1)" font-size="13.27" fill="#555" stroke="#555" stroke-width="0.40" style="font-family:'Liberation Serif',serif" font-style="italic">f</text>
<text transform="translate(228.76 190) scale(1.2600 1)" font-size="8.38" fill="#555" stroke="#555" stroke-width="0.25" style="font-family:'Liberation Serif',serif" font-style="italic">x</text>
<text x="29.30" y="221" font-size="12.29" fill="#262626">A</text>
<text x="41.30" y="221" font-size="12.29" fill="#262626">B</text>
<text x="181.30" y="221" font-size="12.29" fill="#217346">C</text>
<text x="326.30" y="221" font-size="12.29" fill="#262626">D</text>
<text x="472.30" y="221" font-size="12.29" fill="#262626">E</text>
<text x="617.80" y="221" font-size="12.29" fill="#262626">F</text>
<text x="763.30" y="221" font-size="12.29" fill="#262626">G</text>
<text x="908.80" y="221" font-size="12.29" fill="#262626">H</text>
<text x="1023.80" y="221" font-size="12.29" fill="#262626">I</text>
<text x="1189.80" y="221" font-size="12.29" fill="#262626">J</text>
<text x="1313.00" y="221" font-size="12.29" fill="#262626">K</text>
<text x="9.50" y="267.5" font-size="12.29" fill="#262626" clip-path="url(#rowclip)">1</text>
<text x="9.50" y="303.5" font-size="12.29" fill="#217346" clip-path="url(#rowclip)">2</text>
<text x="9.50" y="315.8" font-size="12.29" fill="#262626" clip-path="url(#row3clip)">3</text>
<text x="9.50" y="351.5" font-size="12.29" fill="#262626" clip-path="url(#rowclip)">4</text>
<text x="9.50" y="387.5" font-size="12.29" fill="#262626" clip-path="url(#rowclip)">5</text>
<text x="9.50" y="423.5" font-size="12.29" fill="#262626" clip-path="url(#rowclip)">6</text>
<text x="9.50" y="459.5" font-size="12.29" fill="#262626" clip-path="url(#rowclip)">7</text>
<text x="9.50" y="495.5" font-size="12.29" fill="#262626" clip-path="url(#rowclip)">8</text>
<text x="9.50" y="531.5" font-size="12.29" fill="#262626" clip-path="url(#rowclip)">9</text>
<text x="6.08" y="567.5" font-size="12.29" fill="#262626" clip-path="url(#rowclip)">10</text>
<text x="6.54" y="603.5" font-size="12.29" fill="#262626" clip-path="url(#rowclip)">11</text>
<text x="6.08" y="645.5" font-size="12.29" fill="#262626" clip-path="url(#rowclip)">12</text>
<text x="6.08" y="686.5" font-size="12.29" fill="#262626" clip-path="url(#rowclip)">13</text>
<text x="6.08" y="721.5" font-size="12.29" fill="#262626" clip-path="url(#rowclip)">14</text>
<text transform="translate(62.85 252.9) scale(0.9490 1)" font-size="13.83" fill="#fff">LUZ</text>
<text transform="translate(96.00 247.6) scale(0.9323 1)" font-size="6.01" fill="#c8c8c8">Planilhas</text>
<text transform="translate(96.00 253.6) scale(0.9426 1)" font-size="6.01" fill="#c8c8c8">Empresariais</text>
<text transform="translate(169.30 253.8) scale(0.9603 1)" font-size="10.89" fill="#fff" font-weight="700" stroke="#fff" stroke-width="0.20">CADASTROS</text>
<text transform="translate(264.40 253.8) scale(1.0049 1)" font-size="10.89" fill="#fff" font-weight="700" stroke="#fff" stroke-width="0.20">PROMOÇÕES</text>
<text transform="translate(366.20 253.8) scale(0.9782 1)" font-size="10.89" fill="#fff" font-weight="700" stroke="#fff" stroke-width="0.20">RELATÓRIOS</text>
<text transform="translate(463.00 253.8) scale(0.9860 1)" font-size="10.89" fill="#fff" font-weight="700" stroke="#fff" stroke-width="0.20">DASHBOARDS</text>
<text transform="translate(566.70 253.8) scale(0.9726 1)" font-size="10.89" fill="#fff" font-weight="700" stroke="#fff" stroke-width="0.20">INSTRUÇÕES</text>
<text transform="translate(146.00 299.2) scale(0.9154 1)" font-size="12.01" fill="#404040" font-weight="700" stroke="#404040" stroke-width="0.22">DASHBOARD POR FUNCIONÁRIO</text>
<text transform="translate(97.30 342.6) scale(1.1138 1)" font-size="11.17" fill="#1f1f1f">Selecione um funcionário</text>
<text transform="translate(272.70 343) scale(0.9708 1)" font-size="10.61" fill="#000">Leandro Borges</text>
<text transform="translate(65.50 380.0) scale(0.9313 1)" font-size="15.08" fill="#0d0d0d" font-weight="700" stroke="#0d0d0d" stroke-width="0.27">Cargo Inicial</text>
<text transform="translate(356.30 380.0) scale(0.9371 1)" font-size="15.08" fill="#0d0d0d" font-weight="700" stroke="#0d0d0d" stroke-width="0.27">Cargo Atual</text>
<text transform="translate(647.70 380.0) scale(0.9666 1)" font-size="15.08" fill="#0d0d0d" font-weight="700" stroke="#0d0d0d" stroke-width="0.27">Últimas Promoções</text>
<text transform="translate(937.80 380.0) scale(0.9632 1)" font-size="15.08" fill="#0d0d0d" font-weight="700" stroke="#0d0d0d" stroke-width="0.27">Salários por Quartil</text>
<text transform="translate(64.70 488.0) scale(0.9451 1)" font-size="15.08" fill="#0d0d0d" font-weight="700" stroke="#0d0d0d" stroke-width="0.27">Salário Inicial</text>
<text transform="translate(356.00 488.0) scale(0.9513 1)" font-size="15.08" fill="#0d0d0d" font-weight="700" stroke="#0d0d0d" stroke-width="0.27">Salário Atual</text>
<text transform="translate(65.00 596.0) scale(0.9602 1)" font-size="15.08" fill="#0d0d0d" font-weight="700" stroke="#0d0d0d" stroke-width="0.27">Área + grupo</text>
<text transform="translate(356.04 596.0) scale(0.9580 1)" font-size="15.08" fill="#0d0d0d" font-weight="700" stroke="#0d0d0d" stroke-width="0.27">Posição do Salário Atual em Relação aos Outros</text>
<text transform="translate(107.20 435) scale(0.9530 1)" font-size="15.78" fill="#0d0d0d" font-weight="700" stroke="#0d0d0d" stroke-width="0.28">Analista de Marketing</text>
<text transform="translate(398.65 435) scale(0.9372 1)" font-size="16.06" fill="#0d0d0d" font-weight="700" stroke="#0d0d0d" stroke-width="0.29">Analista de Marketing</text>
<text x="134.20" y="543.5" font-size="19.55" fill="#0d0d0d" font-weight="700" stroke="#0d0d0d" stroke-width="0.35">R$2.600,00</text>
<text x="425.20" y="543.5" font-size="19.55" fill="#0d0d0d" font-weight="700" stroke="#0d0d0d" stroke-width="0.35">R$2.600,00</text>
<text transform="translate(113.27 656) scale(0.9276 1)" font-size="16.06" fill="#0d0d0d" font-weight="700" stroke="#0d0d0d" stroke-width="0.29">Marketing - Analista</text>
<text transform="translate(936.16 415) scale(1.0420 1)" font-size="12.29" fill="#141414">Menor Salário</text>
<text transform="translate(1139.52 415) scale(0.9822 1)" font-size="12.29" fill="#141414">R$800,00</text>
<text transform="translate(936.12 451) scale(1.0793 1)" font-size="12.29" fill="#141414">Primeiro Quartil</text>
<text transform="translate(1139.53 451) scale(0.9733 1)" font-size="12.29" fill="#141414">R$2.600,00</text>
<text transform="translate(936.16 487) scale(1.0393 1)" font-size="12.29" fill="#141414">Mediana</text>
<text transform="translate(1139.53 487) scale(0.9733 1)" font-size="12.29" fill="#141414">R$4.800,00</text>
<text transform="translate(937.20 523) scale(1.0577 1)" font-size="12.29" fill="#141414">Terceiro Quartil</text>
<text transform="translate(1139.53 523) scale(0.9733 1)" font-size="12.29" fill="#141414">R$4.800,00</text>
<text transform="translate(936.13 559) scale(1.0696 1)" font-size="12.29" fill="#141414">Maior Salário</text>
<text transform="translate(1139.52 559) scale(0.9812 1)" font-size="12.29" fill="#141414">R$16.500,00</text>
<text x="430.77" y="652.3" font-size="9.78" fill="#404040">R$ 800</text>
<text x="576.70" y="649.2" font-size="9.78" fill="#404040">R$ 2.600</text>
<text x="727.10" y="645" font-size="9.78" fill="#404040">R$ 4.800</text>
<text x="877.30" y="645.3" font-size="9.78" fill="#404040">R$ 4.800</text>
<text x="1024.98" y="625.3" font-size="9.78" fill="#404040">R$ 16.500</text>
<text x="416.12" y="681.5" font-size="9.78" fill="#595959">Menor Salário</text>
<text x="562.97" y="681.5" font-size="9.78" fill="#595959">Primeiro Quartil</text>
<text x="728.19" y="681.5" font-size="9.78" fill="#595959">Mediana</text>
<text x="864.38" y="681.5" font-size="9.78" fill="#595959">Terceiro Quartil</text>
<text x="1018.75" y="681.5" font-size="9.78" fill="#595959">Maior Salário</text>
<text x="1185.40" y="642.7" font-size="9.78" fill="#595959">Quartis</text>
<text transform="translate(1185.40 662.7) scale(0.9855 1)" font-size="9.78" fill="#595959">Salário Atual</text>
<text transform="translate(112.00 735) scale(0.9853 1)" font-size="12.57" fill="#444">Cad</text>
<text transform="translate(159.60 735) scale(0.9015 1)" font-size="12.57" fill="#444">SAL</text>
<text transform="translate(205.90 735) scale(0.9159 1)" font-size="12.57" fill="#444">Cad_F</text>
<text transform="translate(264.01 735) scale(0.9927 1)" font-size="12.57" fill="#444">PROMO</text>
<text transform="translate(335.82 735) scale(0.8773 1)" font-size="12.57" fill="#444">REL_1</text>
<text transform="translate(393.71 735) scale(0.8854 1)" font-size="12.57" fill="#444">REL_2</text>
<text transform="translate(453.20 735) scale(0.9460 1)" font-size="12.57" fill="#217346" font-weight="700" stroke="#217346" stroke-width="0.23">DASH_F</text>
<text transform="translate(524.39 735) scale(1.1068 1)" font-size="12.57" fill="#444">INI</text>
<text transform="translate(567.01 735) scale(0.9877 1)" font-size="12.57" fill="#444">DUV</text>
<text transform="translate(619.50 735) scale(0.9081 1)" font-size="12.57" fill="#444">SUG</text>
<text transform="translate(668.36 735) scale(0.9419 1)" font-size="12.57" fill="#444">LUZ</text>
<text transform="translate(1337.00 760.5) scale(0.8856 1)" font-size="11.73" fill="#444">90%</text>
</svg>
</div></body></html>
